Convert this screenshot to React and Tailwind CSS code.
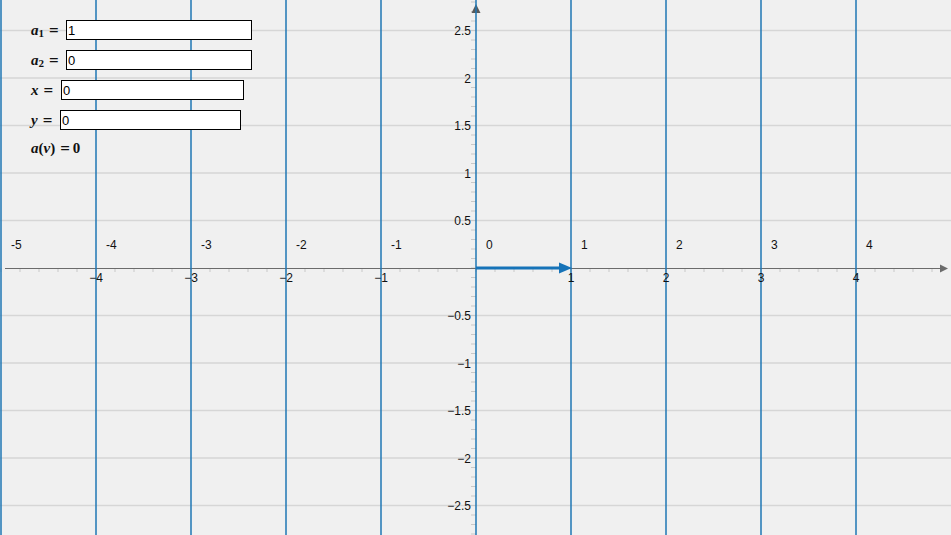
import React from "react";

const BLUE = "#1f77b4";
const OX = 476;
const OY = 268;
const UX = 95;
const UY = 95;

const fmt = (v) => (v < 0 ? "\u2212" + String(-v) : String(v));

const Plot = () => {
  const hGrid = [-5, -4, -3, -2, -1, 1, 2, 3, 4, 5].map((k) => OY - (UY / 2) * k);
  const levels = [-5, -4, -3, -2, -1, 0, 1, 2, 3, 4];
  const xTicks = [];
  for (let j = -25; j <= 24; j++) xTicks.push(OX + 19 * j);
  const yTicks = [];
  for (let j = -28; j <= 28; j++) yTicks.push(OY - 9.5 * j);

  return (
    <svg width="951" height="535" className="block">
      <rect x="0" y="0" width="951" height="535" fill="#f0f0f0" />

      {/* grid */}
      {hGrid.map((y) => (
        <line key={y} x1="0" x2="951" y1={y} y2={y} stroke="#d6d6d6" strokeWidth="1.5" />
      ))}

      {/* ticks */}
      {xTicks.map((x) => (
        <line key={"xt" + x} x1={x} x2={x} y1={OY} y2={OY + 4} stroke="#c8c8c8" strokeWidth="1" />
      ))}
      {yTicks.map((y) => (
        <line key={"yt" + y} x1={OX - 5} x2={OX} y1={y} y2={y} stroke="#c8c8c8" strokeWidth="1" />
      ))}

      {/* x axis */}
      <line x1="5" x2="941" y1={OY + 0.5} y2={OY + 0.5} stroke="#6b6b6b" strokeWidth="1" />
      <polygon points={`940,264.5 948,${OY + 0.5} 940,272.5`} fill="#6b6b6b" />
      {/* y axis arrow */}
      <polygon points={`471.5,13 ${OX},4 480.5,13`} fill="#5a5a5a" />

      {/* level lines */}
      {levels.map((k) => (
        <line
          key={"lv" + k}
          x1={OX + UX * k}
          x2={OX + UX * k}
          y1="0"
          y2="535"
          stroke={BLUE}
          strokeWidth="1.5"
        />
      ))}

      {/* level labels */}
      {levels.map((k) => (
        <text
          key={"ll" + k}
          x={OX + UX * k + 10}
          y="249"
          fontSize="12"
          fontFamily="Liberation Sans, Arial, sans-serif"
          fill="#111"
        >
          {k < 0 ? "-" + -k : k}
        </text>
      ))}

      {/* x axis labels */}
      {[-4, -3, -2, -1, 1, 2, 3, 4].map((k) => (
        <text
          key={"xl" + k}
          x={OX + UX * k}
          y="282"
          textAnchor="middle"
          fontSize="12"
          fontFamily="Liberation Sans, Arial, sans-serif"
          fill="#111"
        >
          {fmt(k)}
        </text>
      ))}

      {/* y axis labels */}
      {[-5, -4, -3, -2, -1, 1, 2, 3, 4, 5].map((k) => (
        <text
          key={"yl" + k}
          x="471"
          y={OY - (UY / 2) * k + 4.5}
          textAnchor="end"
          fontSize="12"
          fontFamily="Liberation Sans, Arial, sans-serif"
          fill="#111"
        >
          {fmt(k / 2)}
        </text>
      ))}

      {/* vector */}
      <line x1={OX} x2="561" y1={OY} y2={OY} stroke="#1673b8" strokeWidth="3" />
      <polygon points={`559,262.5 572,${OY} 559,273.5`} fill="#1673b8" />
    </svg>
  );
};

const serif = { fontFamily: '"Liberation Serif", "DejaVu Serif", serif' };

const Eq = () => <span className="ml-[5px] text-[17px] font-bold leading-none">=</span>;

const MathLabel = ({ children, width }) => (
  <span
    className="flex items-center text-[15px] font-bold text-[#111] whitespace-nowrap leading-none shrink-0"
    style={{ ...serif, width }}
  >
    {children}
  </span>
);

const Field = ({ label, value, width, labelWidth }) => (
  <div className="flex items-center h-[20px]">
    <MathLabel width={labelWidth}>{label}</MathLabel>
    <input
      readOnly
      value={value}
      className="h-[20px] border border-black bg-white px-[1px] text-[13px] text-black outline-none"
      style={{ width, fontFamily: '"Liberation Sans", Arial, sans-serif' }}
    />
  </div>
);

export default function App() {
  return (
    <div className="relative w-[951px] h-[535px] overflow-hidden bg-[#f0f0f0]">
      <Plot />
      <div className="absolute left-[31px] top-[20px] flex flex-col gap-[10px]">
        <Field
          label={
            <>
              <i>a</i>
              <span className="text-[11px] mt-[6px]">1</span>
              <Eq />
            </>
          }
          value="1"
          width="186px"
          labelWidth="35px"
        />
        <Field
          label={
            <>
              <i>a</i>
              <span className="text-[11px] mt-[6px]">2</span>
              <Eq />
            </>
          }
          value="0"
          width="186px"
          labelWidth="35px"
        />
        <Field label={<><i>x</i><Eq /></>} value="0" width="183px" labelWidth="30px" />
        <Field label={<><i>y</i><Eq /></>} value="0" width="181px" labelWidth="29px" />
        <div className="h-[16px] flex items-center">
          <MathLabel>
            <i>a</i>(<i>v</i>)<Eq />
            <span className="ml-[3px]">0</span>
          </MathLabel>
        </div>
      </div>
    </div>
  );
}
